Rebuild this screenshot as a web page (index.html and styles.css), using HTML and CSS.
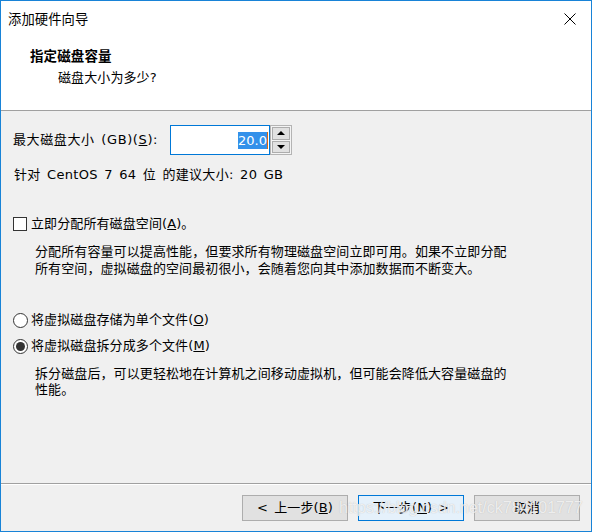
FILE: index.html
```html
<!DOCTYPE html>
<html lang="zh">
<head>
<meta charset="utf-8">
<title>添加硬件向导</title>
<link rel="stylesheet" href="styles.css">
</head>
<body>
<div class="window">
  <div class="top">
    <div class="titlebar">
      <span class="title">添加硬件向导</span>
      <svg class="close" width="12" height="12" viewBox="0 0 12 12"><path d="M0.5 0.5 L11.5 11.5 M11.5 0.5 L0.5 11.5" stroke="#000" stroke-width="1" fill="none"/></svg>
    </div>
    <div class="head">
      <div class="h1">指定磁盘容量</div>
      <div class="h2">磁盘大小为多少?</div>
    </div>
  </div>
  <div class="body">
    <div class="row-size">
      <span class="size-label">最大磁盘大小 (GB)(<u>S</u>):</span>
      <div class="spin-input"><span class="sel">20.0</span><span class="caret"></span></div>
      <div class="spinner">
        <div class="spin-btn"><span class="tri-up"></span></div>
        <div class="spin-btn"><span class="tri-down"></span></div>
      </div>
    </div>
    <div class="row-hint">针对 CentOS 7 64 位 的建议大小: 20 GB</div>
    <div class="row-check"><span class="checkbox"></span><span>立即分配所有磁盘空间(<u>A</u>)。</span></div>
    <div class="desc desc1">分配所有容量可以提高性能，但要求所有物理磁盘空间立即可用。如果不立即分配<br>所有空间，虚拟磁盘的空间最初很小，会随着您向其中添加数据而不断变大。</div>
    <div class="row-radio r1"><span class="radio"></span><span>将虚拟磁盘存储为单个文件(<u>O</u>)</span></div>
    <div class="row-radio r2"><span class="radio checked"></span><span>将虚拟磁盘拆分成多个文件(<u>M</u>)</span></div>
    <div class="desc desc2">拆分磁盘后，可以更轻松地在计算机之间移动虚拟机，但可能会降低大容量磁盘的<br>性能。</div>
  </div>
  <div class="footer">
    <button class="btn">&lt; 上一步(<u>B</u>)</button>
    <button class="btn default">下一步(<u>N</u>) &gt;</button>
    <button class="btn">取消</button>
    <span class="watermark">https://blog.csdn.net/ck784101777</span>
  </div>
</div>
</body>
</html>
```

FILE: styles.css
```css
* { box-sizing: border-box; }
html, body { margin: 0; padding: 0; }
body {
  width: 592px;
  height: 532px;
  font-family: "DejaVu Sans", "Noto Sans CJK SC", sans-serif;
  font-size: 13px;
  letter-spacing: 0.1px;
  word-spacing: 2px;
  color: #000;
  background: #f0f0f0;
}
.window {
  position: relative;
  width: 592px;
  height: 532px;
  border: 1px solid #1883d7;
  background: #f0f0f0;
  display: flex;
  flex-direction: column;
  overflow: hidden;
}
.top {
  height: 110px;
  background: #fff;
  border-bottom: 1px solid #a0a0a0;
  flex: none;
}
.titlebar {
  height: 37px;
  display: flex;
  align-items: center;
  justify-content: space-between;
  padding-left: 7px;
  padding-right: 15px;
}
.title { line-height: 20px; font-size: 13.3px; }
.close { display: block; margin-top: -1px; }
.head { padding-top: 8px; }
.h1 {
  line-height: 20px;
  font-weight: bold;
  padding-left: 29px;
  font-size: 13.5px;
}
.h2 {
  line-height: 20px;
  margin-top: 2px;
  padding-left: 57px;
}
.body {
  flex: 1;
  padding: 14px 0 0 12px;
}
.row-size {
  display: flex;
  align-items: center;
  height: 30px;
}
.size-label {
  width: 157px;
  line-height: 20px;
  letter-spacing: 0.6px;
}
.spin-input {
  width: 100px;
  height: 30px;
  background: #fff;
  border: 1px solid #0078d7;
  display: flex;
  justify-content: flex-end;
  align-items: center;
  padding-right: 1px;
}
.sel {
  background: #3391ea;
  color: #fff;
  line-height: 17px;
  height: 17px;
  letter-spacing: 0;
}
.caret {
  width: 1px;
  height: 17px;
  background: #d86a10;
}
.spinner {
  width: 22px;
  height: 30px;
  border: 1px solid #b4b4b4;
  background: #f4f4f4;
  display: flex;
  flex-direction: column;
  padding: 1px;
  gap: 1px;
}
.spin-btn {
  flex: 1;
  border: 1px solid #adadad;
  background: #e1e1e1;
  display: flex;
  align-items: center;
  justify-content: center;
}
.tri-up, .tri-down {
  width: 0;
  height: 0;
  border-left: 4px solid transparent;
  border-right: 4px solid transparent;
}
.tri-up { border-bottom: 4px solid #000; }
.tri-down { border-top: 4px solid #000; }
.row-hint {
  margin-top: 10px;
  line-height: 20px;
  padding-left: 1px;
  letter-spacing: 0.3px;
}
.row-check, .row-radio {
  display: flex;
  align-items: center;
  line-height: 20px;
  height: 20px;
}
.row-check { margin-top: 29px; }
.checkbox {
  width: 14px;
  height: 14px;
  border: 1px solid #333;
  background: #fff;
  margin-right: 4px;
  flex: none;
}
.desc {
  padding-left: 22px;
  white-space: nowrap;
}
.desc1 { margin-top: 9px; line-height: 17px; }
.desc2 { margin-top: 10px; line-height: 16px; }
.r1 { margin-top: 33px; }
.r2 { margin-top: 6px; }
.radio {
  width: 15px;
  height: 15px;
  border: 1px solid #333;
  border-radius: 50%;
  background: #fff;
  margin-right: 3px;
  flex: none;
  display: flex;
  align-items: center;
  justify-content: center;
}
.radio.checked::after {
  content: "";
  width: 9px;
  height: 9px;
  border-radius: 50%;
  background: #333;
}
.footer {
  position: relative;
  flex: none;
  border-top: 1px solid #a0a0a0;
  box-shadow: inset 0 1px 0 #fff;
  padding: 11px 11px 10px 0;
  display: flex;
  justify-content: flex-end;
  gap: 10px;
}
.btn {
  width: 106px;
  height: 26px;
  border: 1px solid #adadad;
  background: #e1e1e1;
  font-family: "DejaVu Sans", "Noto Sans CJK SC", sans-serif;
  font-size: 13px;
  letter-spacing: 0.1px;
  word-spacing: 2px;
  color: #000;
  padding: 0;
  line-height: 20px;
}
.btn.default {
  border-color: #0078d7;
  background: #e5f1fb;
}
.watermark {
  position: absolute;
  left: 338px;
  top: 15px;
  font-family: "Liberation Sans", Arial, sans-serif;
  font-size: 16px;
  letter-spacing: 0;
  word-spacing: 0;
  color: rgba(255, 255, 255, 0.75);
  text-shadow: 0 0 1px rgba(150, 150, 150, 0.6);
  white-space: nowrap;
  pointer-events: none;
}
```
